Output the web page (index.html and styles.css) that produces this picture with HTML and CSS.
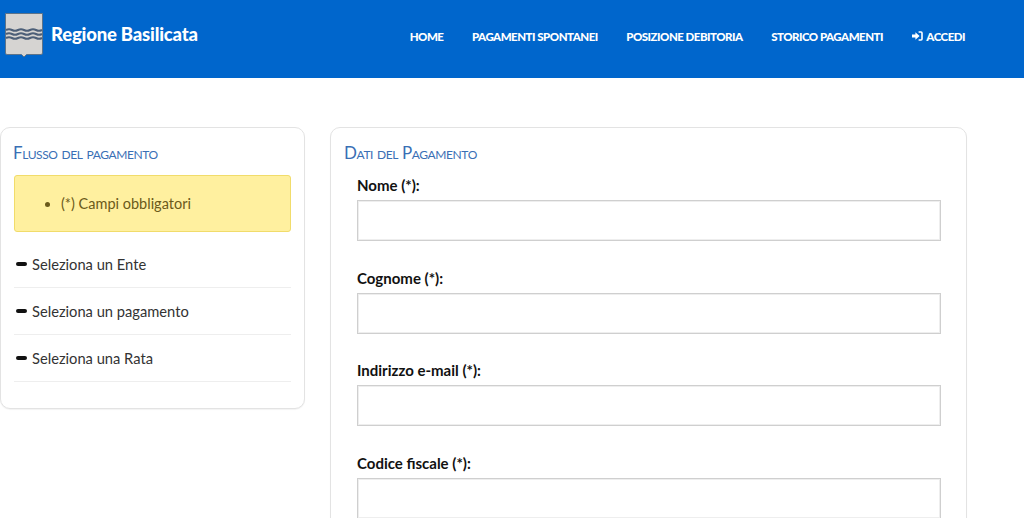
FILE: index.html
```html
<!DOCTYPE html>
<html lang="it">
  <head>
    <meta charset="UTF-8" />
    <title>Regione Basilicata</title>
    <link rel="stylesheet" href="styles.css">
  </head>
  <body>
    <header class="topbar">
      <div class="brand">
        <svg class="logo" width="38" height="45" viewBox="0 0 38 45">
          <path d="M0.5 0.5H37.5V40Q37.5 41.5 36 41.5H21.5L19 44L16.5 41.5H2Q0.5 41.5 0.5 40Z" fill="#d6d4d2" stroke="#5d7389" />
          <g fill="none" stroke="#4d5f78" stroke-width="2">
            <path d="M1 17q3-1.6 6 0t6 0t6 0t6 0t6 0t6 0" />
            <path d="M1 21q3-1.6 6 0t6 0t6 0t6 0t6 0t6 0" />
            <path d="M1 25q3-1.6 6 0t6 0t6 0t6 0t6 0t6 0" />
          </g>
        </svg>
        <span class="brand-name">Regione Basilicata</span>
      </div>
      <nav class="menu">
        <a href="#">HOME</a>
        <a href="#">PAGAMENTI SPONTANEI</a>
        <a href="#">POSIZIONE DEBITORIA</a>
        <a href="#">STORICO PAGAMENTI</a>
        <a href="#" class="login">
          <svg width="11" height="10" viewBox="0 0 11 10">
            <path d="M0 3.6H3.4V1.2L7.6 5L3.4 8.8V6.4H0Z" fill="#fff" />
            <path d="M6.6 1H9Q10 1 10 2V8Q10 9 9 9H6.6" fill="none" stroke="#fff" stroke-width="1.6" />
          </svg>
          ACCEDI
        </a>
      </nav>
    </header>

    <div class="content">
      <aside class="card side">
        <h2 class="card-title">Flusso del pagamento</h2>
        <div class="alert">
          <ul>
            <li>(*) Campi obbligatori</li>
          </ul>
        </div>
        <div class="step"><span class="minus"></span>Seleziona un Ente</div>
        <div class="step"><span class="minus"></span>Seleziona un pagamento</div>
        <div class="step"><span class="minus"></span>Seleziona una Rata</div>
      </aside>

      <main class="card form">
        <h2 class="card-title">Dati del Pagamento</h2>
        <div class="field">
          <label for="nome">Nome (*):</label>
          <input type="text" id="nome" />
        </div>
        <div class="field">
          <label for="cognome">Cognome (*):</label>
          <input type="text" id="cognome" />
        </div>
        <div class="field">
          <label for="email">Indirizzo e-mail (*):</label>
          <input type="text" id="email" />
        </div>
        <div class="field">
          <label for="cf">Codice fiscale (*):</label>
          <input type="text" id="cf" />
        </div>
      </main>
    </div>
  </body>
</html>
```

FILE: styles.css
```css
* {
  margin: 0;
  padding: 0;
  box-sizing: border-box;
}
html, body {
  height: 518px;
  overflow: hidden;
}
body {
  font-family: Lato, sans-serif;
  background-color: #fff;
  color: #333;
}

.topbar {
  display: flex;
  justify-content: space-between;
  height: 78px;
  background-color: #0066cc;
  color: #fff;
  padding: 13px 59px 0 5px;
}
.brand {
  display: flex;
  align-items: flex-start;
}
.logo {
  display: block;
}
.brand-name {
  margin-left: 8px;
  margin-top: 7px;
  font-size: 18.5px;
  line-height: 28px;
  font-weight: 900;
  letter-spacing: -0.2px;
}
.menu {
  display: flex;
  align-items: center;
  gap: 28.5px;
  height: 46px;
}
.menu a {
  color: #fff;
  text-decoration: none;
  font-size: 11.5px;
  font-weight: 900;
  letter-spacing: -0.5px;
}
.login svg {
  margin-right: 2px;
}

.content {
  display: flex;
  align-items: flex-start;
  gap: 25px;
  padding-top: 49px;
}
.card {
  background-color: #fff;
  border: 1px solid #e3e3e3;
  border-radius: 10px;
  box-shadow: 0 1px 1px rgba(0, 0, 0, 0.05);
}
.card-title {
  margin-left: -1px;
  font-size: 17px;
  line-height: 20px;
  font-weight: 400;
  font-variant: small-caps;
  letter-spacing: -0.4px;
  color: #3a6fb5;
}

.side {
  width: 305px;
  height: 282px;
  padding: 15px 13px 0 13px;
}
.alert {
  margin-top: 12px;
  height: 57px;
  background-color: #fff09f;
  border: 1px solid #f1dc6b;
  border-radius: 3px;
  color: #6b5a1a;
  font-size: 14.5px;
  padding: 18px 0 0 46px;
  line-height: 20px;
}
.step {
  display: flex;
  align-items: center;
  height: 47px;
  border-bottom: 1px solid #eee;
  font-size: 14.7px;
  color: #333;
  padding-left: 2px;
}
.alert + .step {
  margin-top: 9px;
}
.minus {
  width: 11px;
  height: 4px;
  margin-right: 5px;
  margin-top: -1px;
  background-color: #111;
  border-radius: 2px;
}

.form {
  width: 637px;
  height: 500px;
  padding: 15px 25px 0 14px;
}
.card-title + .field {
  margin-top: 12px;
}
.field {
  padding-left: 12px;
  margin-bottom: 26.5px;
}
.field label {
  display: block;
  font-size: 15px;
  line-height: 20px;
  font-weight: 700;
  color: #111;
  margin-bottom: 5px;
}
.field input {
  display: block;
  width: 100%;
  height: 41px;
  border: 1px solid #cfcfcf;
  box-shadow: inset 0 0 0 1px #eee;
  background-color: #fff;
}
```
